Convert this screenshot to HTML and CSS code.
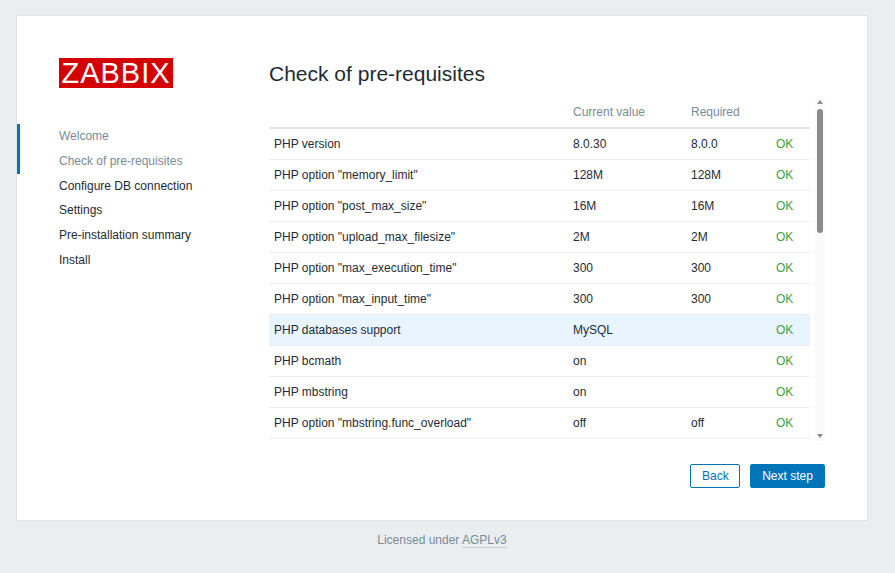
FILE: index.html
```html
<!DOCTYPE html>
<html lang="en">
<head>
  <meta charset="UTF-8" />
  <meta name="viewport" content="width=device-width, initial-scale=1.0" />
  <title>Installation</title>
  <link rel="stylesheet" href="styles.css">
</head>
<body>
  <div class="setup-card">
    <div class="setup-left">
      <div class="logo">ZABBIX</div>
      <ul class="steps">
        <li class="done">Welcome</li>
        <li class="done">Check of pre-requisites</li>
        <li>Configure DB connection</li>
        <li>Settings</li>
        <li>Pre-installation summary</li>
        <li>Install</li>
      </ul>
    </div>
    <div class="setup-right">
      <h1>Check of pre-requisites</h1>
      <div class="table-wrap">
        <table class="req-table">
          <thead>
            <tr><th></th><th>Current value</th><th>Required</th><th></th></tr>
          </thead>
          <tbody>
            <tr><td>PHP version</td><td>8.0.30</td><td>8.0.0</td><td class="ok">OK</td></tr>
            <tr><td>PHP option "memory_limit"</td><td>128M</td><td>128M</td><td class="ok">OK</td></tr>
            <tr><td>PHP option "post_max_size"</td><td>16M</td><td>16M</td><td class="ok">OK</td></tr>
            <tr><td>PHP option "upload_max_filesize"</td><td>2M</td><td>2M</td><td class="ok">OK</td></tr>
            <tr><td>PHP option "max_execution_time"</td><td>300</td><td>300</td><td class="ok">OK</td></tr>
            <tr><td>PHP option "max_input_time"</td><td>300</td><td>300</td><td class="ok">OK</td></tr>
            <tr class="hover"><td>PHP databases support</td><td>MySQL</td><td></td><td class="ok">OK</td></tr>
            <tr><td>PHP bcmath</td><td>on</td><td></td><td class="ok">OK</td></tr>
            <tr><td>PHP mbstring</td><td>on</td><td></td><td class="ok">OK</td></tr>
            <tr><td>PHP option "mbstring.func_overload"</td><td>off</td><td>off</td><td class="ok">OK</td></tr>
          </tbody>
        </table>
        <div class="scrollbar">
          <span class="arrow-up"></span>
          <span class="thumb"></span>
          <span class="arrow-down"></span>
        </div>
      </div>
      <div class="buttons">
        <button class="btn-alt">Back</button>
        <button class="btn-main">Next step</button>
      </div>
    </div>
  </div>
  <div class="footer">Licensed under <a href="#">AGPLv3</a></div>
</body>
</html>
```

FILE: styles.css
```css
html, body {
  height: 100%;
}
body {
  margin: 0;
  padding-top: 15px;
  box-sizing: border-box;
  background-color: #ebeef0;
  font-family: "Liberation Sans", Arial, sans-serif;
  font-size: 12px;
  color: #1f2c33;
  overflow: hidden;
}
.setup-card {
  display: flex;
  box-sizing: border-box;
  width: 852px;
  height: 506px;
  margin-left: 16px;
  background-color: #fff;
  border: 1px solid #dfe4e7;
}
.setup-left {
  width: 252px;
  flex-shrink: 0;
  padding-top: 42px;
}
.logo {
  width: 114px;
  height: 30px;
  margin-left: 42px;
  background-color: #d40000;
  color: #fff;
  font-size: 29px;
  letter-spacing: 1px;
  line-height: 30px;
  text-align: center;
}
.steps {
  list-style: none;
  margin: 36px 0 0;
  padding: 0;
}
.steps li {
  height: 24.75px;
  line-height: 24.75px;
  padding-left: 42px;
}
.steps li.done {
  padding-left: 39px;
  border-left: 3px solid #0275b8;
  color: #768d99;
}
.setup-right {
  flex: 1;
  padding: 0 42px 0 0;
}
h1 {
  margin: 0;
  padding-top: 46px;
  height: 35px;
  font-size: 21px;
  font-weight: normal;
  line-height: 24px;
}
.table-wrap {
  display: flex;
  justify-content: space-between;
  height: 344px;
  overflow: hidden;
}
.req-table {
  width: 541px;
  height: 342px;
  border-collapse: separate;
  border-spacing: 0;
  table-layout: fixed;
}
.req-table th {
  height: 32px;
  padding: 0 5px;
  box-sizing: border-box;
  border-bottom: 2px solid #dfe4e7;
  color: #768d99;
  font-weight: normal;
  text-align: left;
}
.req-table th:nth-child(1) { width: 299px; }
.req-table th:nth-child(2) { width: 118px; }
.req-table th:nth-child(3) { width: 85px; }
.req-table td {
  height: 31px;
  padding: 0 5px;
  box-sizing: border-box;
  border-bottom: 1px solid #ebeef0;
}
.req-table tr.hover td {
  background-color: #e8f5ff;
}
.req-table td.ok {
  color: #429e47;
}
.scrollbar {
  display: flex;
  flex-direction: column;
  align-items: center;
  width: 10px;
  background-color: #fafafa;
}
.arrow-up {
  margin-top: 3px;
  border: 3px solid transparent;
  border-top: 0;
  border-bottom: 4px solid #8c8c8c;
}
.thumb {
  width: 6px;
  height: 124px;
  margin-top: 5px;
  background-color: #8c8c8c;
  border-radius: 3px;
}
.arrow-down {
  margin-top: auto;
  margin-bottom: 3px;
  border: 3px solid transparent;
  border-bottom: 0;
  border-top: 4px solid #8c8c8c;
}
.buttons {
  display: flex;
  justify-content: flex-end;
  gap: 10px;
  margin-top: 23px;
}
.buttons button {
  height: 24px;
  box-sizing: border-box;
  padding: 0 11px;
  border: 1px solid #0275b8;
  border-radius: 2px;
  font-family: inherit;
  font-size: 12px;
}
.btn-alt {
  width: 50px;
  background-color: #fff;
  color: #0275b8;
}
.btn-main {
  width: 75px;
  background-color: #0275b8;
  color: #fff;
}
.footer {
  margin-top: 12px;
  text-align: center;
  padding-right: 11px;
  color: #768d99;
}
.footer a {
  color: #768d99;
  text-decoration: none;
  border-bottom: 1px solid #c5ccd1;
}
```
